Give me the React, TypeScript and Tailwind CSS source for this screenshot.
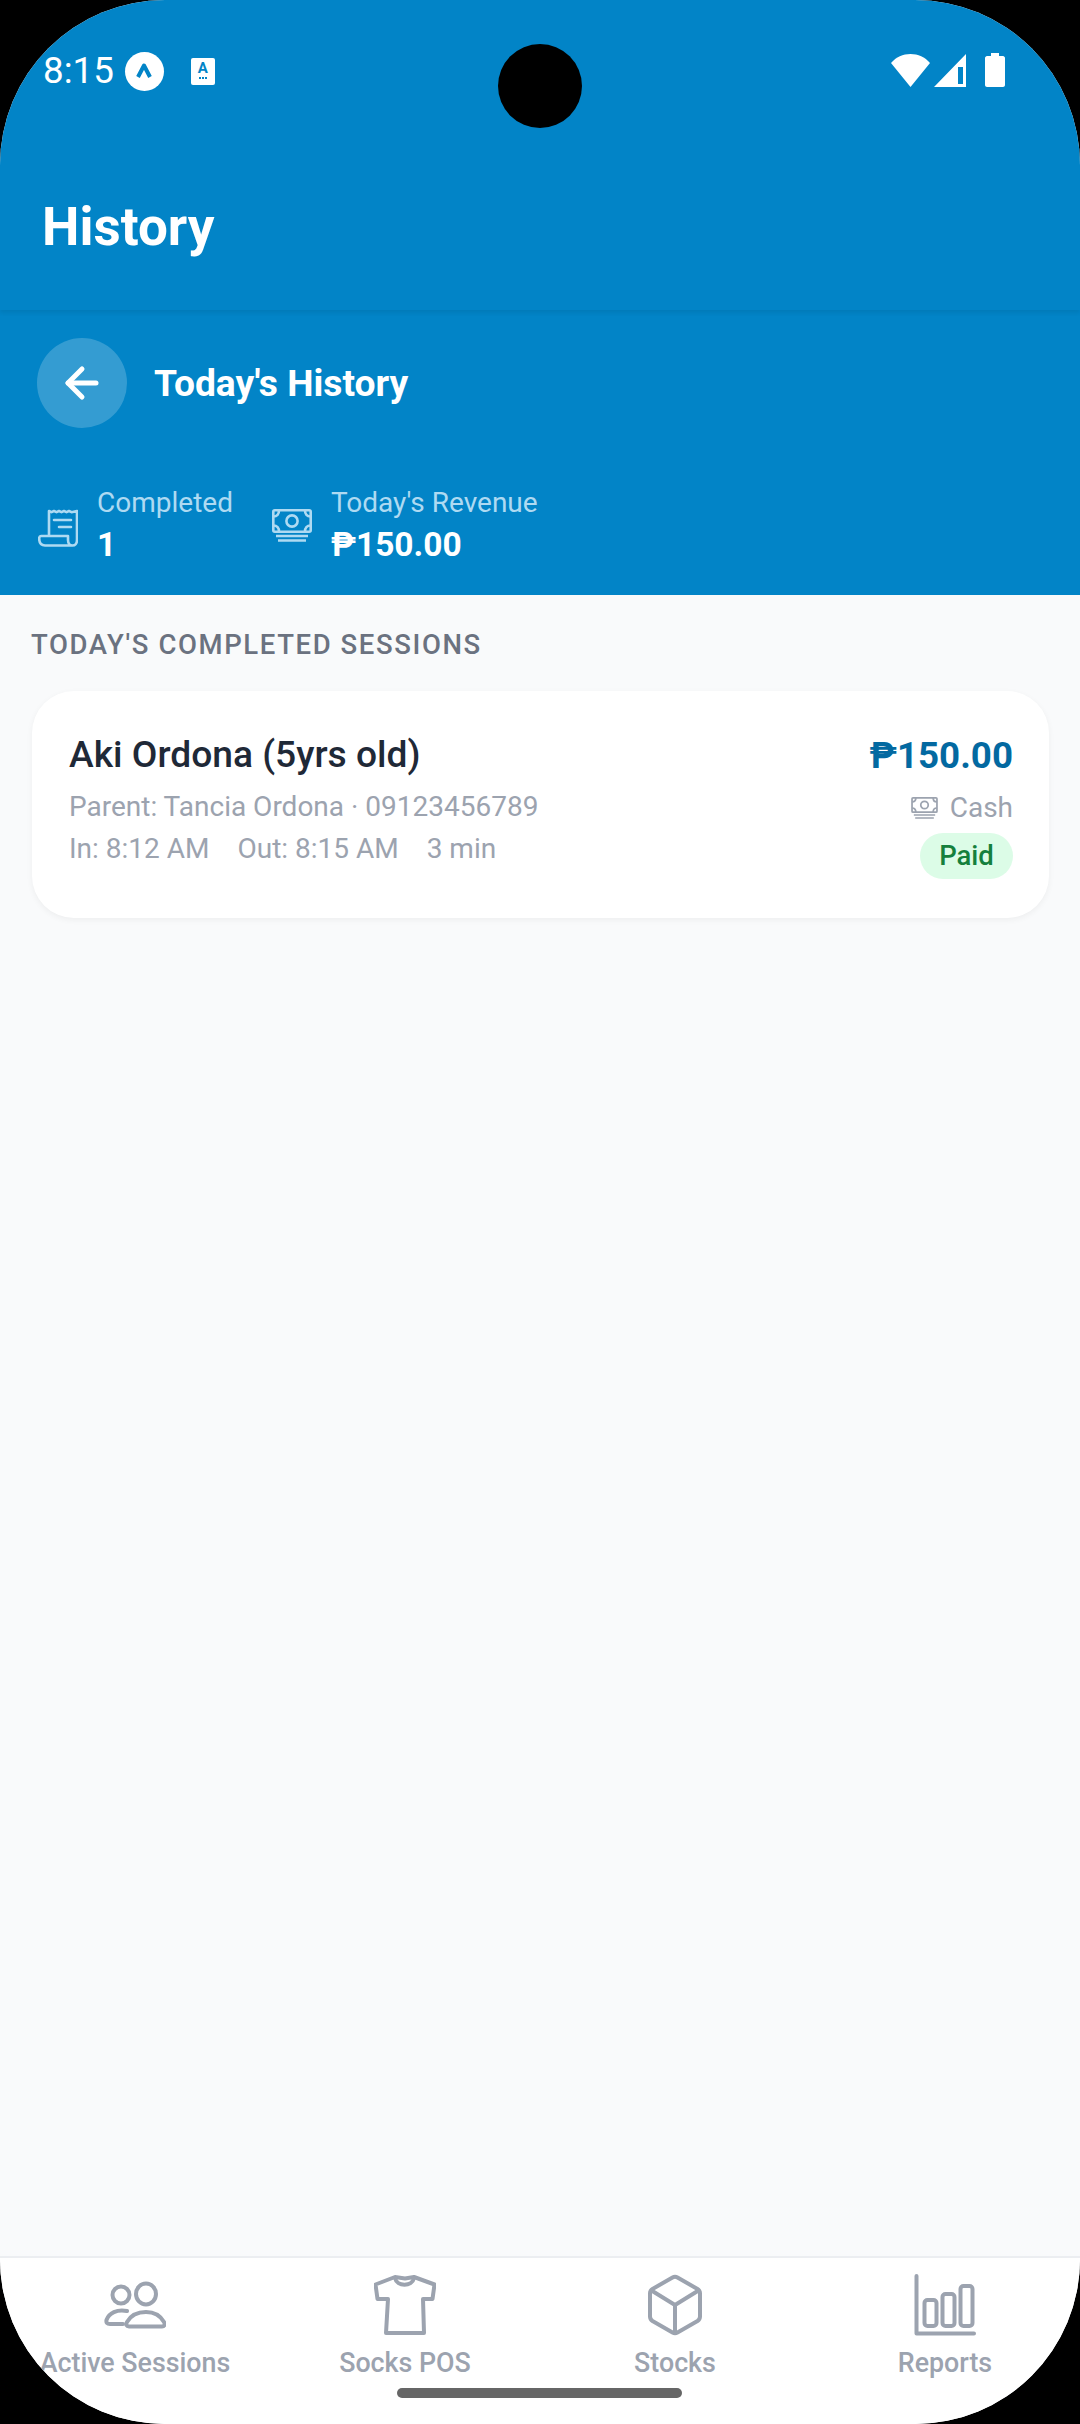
import { ArrowLeft } from "lucide-react";

function MoneyIcon({ className }: { className?: string }) {
  return (
    <svg viewBox="0 0 40 33" fill="none" stroke="currentColor" strokeWidth="2.6" className={className}>
      <rect x="1.3" y="1.3" width="37.4" height="21.4" rx="1.5" />
      <circle cx="20" cy="12" r="5.6" />
      <path d="M1.5 7.5C5 7.5 7 5 7 1.5M33 1.5C33 5 35 7.5 38.5 7.5M1.5 16.5C5 16.5 7 19 7 22.5M33 22.5C33 19 35 16.5 38.5 16.5" />
      <path d="M4 27H36M6 31.5H34" />
    </svg>
  );
}

function ReceiptIcon({ className }: { className?: string }) {
  return (
    <svg viewBox="0 0 40 38" fill="none" stroke="currentColor" strokeWidth="2.6" strokeLinecap="round" strokeLinejoin="round" className={className}>
      <path d="M11 27V2L13.5 3.2L16 2L18.5 3.2L21 2L23.5 3.2L26 2L28.5 3.2L31 2L33.5 3.2L39 2V31C39 34.5 37 36.5 34.5 36.5C32 36.5 30 34.5 30 31V27H3C1.8 27 1.2 28 1.2 29.5C1.2 34 3.5 36.5 7 36.5H34.5" />
      <path d="M16 11H33M21 18H33" />
    </svg>
  );
}

function UsersIcon() {
  return (
    <svg viewBox="0 0 62 62" fill="none" stroke="currentColor" strokeWidth="4" strokeLinecap="round" strokeLinejoin="round" className="h-[62px] w-[62px]">
      <ellipse cx="42" cy="20" rx="10" ry="10.5" />
      <circle cx="17" cy="21" r="8.5" />
      <path d="M25 52.5C22.5 52.5 21.5 50.5 23 48C27 41 34 38 42 38C50 38 56 41 60 48C61.5 50.5 60.5 52.5 58 52.5Z" />
      <path d="M23 37C13 35 5 39 2.5 46C2 48.5 3 50 6 50H19" />
    </svg>
  );
}

function ShirtIcon() {
  return (
    <svg viewBox="0 0 62 62" fill="none" stroke="currentColor" strokeWidth="4" strokeLinecap="round" strokeLinejoin="round" className="h-[62px] w-[62px]">
      <path d="M21 3L31 4.5L40 3L60.5 10.5L58.5 25H49L50 59H12L14 25H3.5L1.5 10.5Z" />
      <path d="M21 4C23 13 38 13 40 4" />
    </svg>
  );
}

function CubeIcon() {
  return (
    <svg viewBox="0 0 54 62" fill="none" stroke="currentColor" strokeWidth="4" strokeLinecap="round" strokeLinejoin="round" className="h-[62px] w-[54px]">
      <path d="M24.5 3.5C26 2.6 28 2.6 29.5 3.5L49.5 15C51 16 52 17.5 52 19.5V42.5C52 44.5 51 46 49.5 47L29.5 58.5C28 59.4 26 59.4 24.5 58.5L4.5 47C3 46 2 44.5 2 42.5V19.5C2 17.5 3 16 4.5 15Z" />
      <path d="M3.5 16.5L27 31L50.5 16.5M27 31V59" />
    </svg>
  );
}

function ChartIcon() {
  return (
    <svg viewBox="0 0 62 62" fill="none" stroke="currentColor" strokeWidth="4" strokeLinecap="round" strokeLinejoin="round" className="h-[62px] w-[62px]">
      <path d="M2.5 2V59.5H60" />
      <rect x="10.5" y="26" width="12" height="26" rx="3" />
      <rect x="28.5" y="20" width="12" height="32" rx="3" />
      <rect x="46.5" y="12" width="12" height="40" rx="3" />
    </svg>
  );
}

const tabs = [
  { label: "Active Sessions", icon: <UsersIcon /> },
  { label: "Socks POS", icon: <ShirtIcon /> },
  { label: "Stocks", icon: <CubeIcon /> },
  { label: "Reports", icon: <ChartIcon /> },
];

function StatusBar() {
  return (
    <div className="relative flex h-[150px] items-start justify-between pl-[43px] pr-[75px] pt-[51px]">
      <div className="flex items-center">
        <span className="text-[36.75px] leading-[40px] text-white">8:15</span>
        <span className="ml-[11px] flex h-[39px] w-[39px] items-center justify-center rounded-full bg-white">
          <svg viewBox="0 0 24 24" fill="none" stroke="#0284c7" strokeWidth="4" strokeLinejoin="round" className="h-[24px] w-[24px]">
            <path d="M6 18L12 6.5L18 18" />
          </svg>
        </span>
        <span className="ml-[27px] flex h-[27px] w-[24px] flex-col items-center rounded-[2px] bg-white pt-[3px]">
          <span className="text-[15px] font-bold leading-[15px] text-[#0284c7]">A</span>
          <span className="mt-[1px] flex gap-[1px]">
            <span className="h-[2px] w-[2px] bg-[#0284c7]" />
            <span className="h-[2px] w-[2px] bg-[#0284c7]" />
            <span className="h-[2px] w-[2px] bg-[#0284c7]" />
          </span>
        </span>
      </div>
      <div className="absolute left-[498px] top-[44px] h-[84px] w-[84px] rounded-full bg-black" />
      <div className="flex items-center gap-[4px] pt-[2px]">
        <svg viewBox="0 0 39 33" className="h-[33px] w-[39px]" fill="white">
          <path d="M0 9C5 3 12 0 19.5 0C27 0 34 3 39 9L19.5 33Z" />
        </svg>
        <svg viewBox="0 0 32 33" className="h-[33px] w-[32px]" fill="white">
          <path fillRule="evenodd" d="M32 0V33H0ZM29 13H24V30H29Z" />
        </svg>
        <svg viewBox="0 0 20 34" className="ml-[15px] h-[34px] w-[20px]" fill="white">
          <path d="M6 0H14V3H18C19 3 20 4 20 5V32C20 33 19 34 18 34H2C1 34 0 33 0 32V5C0 4 1 3 2 3H6Z" />
        </svg>
      </div>
    </div>
  );
}

export default function App() {
  return (
    <div className="h-[2424px] w-[1080px] bg-black font-['Roboto',sans-serif]">
      <div className="flex h-full w-full flex-col overflow-hidden rounded-[165px] bg-[#f9fafb]">
        <header className="relative z-10 h-[310px] shrink-0 bg-[#0284c7] shadow-[0_3px_4px_rgba(0,0,0,0.07)]">
          <StatusBar />
          <h1 className="pl-[42px] pt-[45px] text-[53px] font-bold leading-[64px] text-white">History</h1>
        </header>

        <section className="h-[285px] shrink-0 bg-[#0284c7] px-[37px] pt-[28px]">
          <div className="flex items-center gap-[27px]">
            <button type="button" className="flex h-[90px] w-[90px] items-center justify-center rounded-full bg-white/20 text-white">
              <ArrowLeft size={48} strokeWidth={2.5} />
            </button>
            <span className="text-[37.2px] font-bold leading-[48px] text-white">Today's History</span>
          </div>
          <div className="mt-[56px] flex items-center">
            <ReceiptIcon className="ml-[1px] mt-[5px] h-[38px] w-[40px] text-[#aedaf2]" />
            <div className="ml-[19px] flex flex-col">
              <span className="text-[28px] leading-[38px] text-[#aedaf2]">Completed</span>
              <span className="mt-[1px] text-[33.5px] font-bold leading-[44px] text-white">1</span>
            </div>
            <MoneyIcon className="ml-[39px] h-[33px] w-[40px] text-[#aedaf2]" />
            <div className="ml-[19px] flex flex-col">
              <span className="text-[28px] leading-[38px] text-[#aedaf2]">Today's Revenue</span>
              <span className="mt-[1px] text-[33.5px] font-bold leading-[44px] text-white">₱150.00</span>
            </div>
          </div>
        </section>

        <main className="flex-1 px-[31px]">
          <p className="mt-[34px] text-[27.5px] font-medium uppercase leading-[32px] tracking-[1.6px] text-[#6b7280]">
            Today's Completed Sessions
          </p>
          <div className="ml-[1px] mt-[30px] flex h-[227px] justify-between rounded-[42px] bg-white pl-[37px] pr-[36px] pt-[38px] shadow-[0_2px_6px_rgba(0,0,0,0.05)]">
            <div className="flex flex-col">
              <span className="text-[37.2px] font-medium leading-[50px] text-[#1f2937]">Aki Ordona (5yrs old)</span>
              <span className="mt-[8px] text-[28px] leading-[40px] text-[#9ca3af]">Parent: Tancia Ordona · 09123456789</span>
              <span className="mt-[2px] flex gap-[28px] text-[28px] leading-[40px] text-[#9ca3af]">
                <span>In: 8:12 AM</span>
                <span>Out: 8:15 AM</span>
                <span>3 min</span>
              </span>
            </div>
            <div className="flex flex-col items-end">
              <span className="mt-[2px] text-[36.75px] font-bold leading-[50px] text-[#0369a1]">₱150.00</span>
              <span className="mt-[8px] flex items-center gap-[12px] text-[28px] leading-[38px] text-[#9ca3af]">
                <MoneyIcon className="h-[22px] w-[27px]" />
                Cash
              </span>
              <span className="mt-[6px] flex h-[46px] w-[93px] items-center justify-center rounded-full bg-[#dcfce7] text-[27.5px] font-medium text-[#15803d]">
                Paid
              </span>
            </div>
          </div>
        </main>

        <nav className="relative h-[168px] shrink-0 border-t-[2px] border-[#eceef1] bg-white">
          <div className="grid grid-cols-4 pt-[16px]">
            {tabs.map((tab) => (
              <div key={tab.label} className="flex flex-col items-center text-[#9ca3af]">
                <div className="flex h-[62px] items-center justify-center">{tab.icon}</div>
                <span className="mt-[11px] text-[26.8px] font-medium leading-[32px]">{tab.label}</span>
              </div>
            ))}
          </div>
          <div className="absolute bottom-[26px] left-[397px] h-[10px] w-[285px] rounded-full bg-[#666666]" />
        </nav>
      </div>
    </div>
  );
}
